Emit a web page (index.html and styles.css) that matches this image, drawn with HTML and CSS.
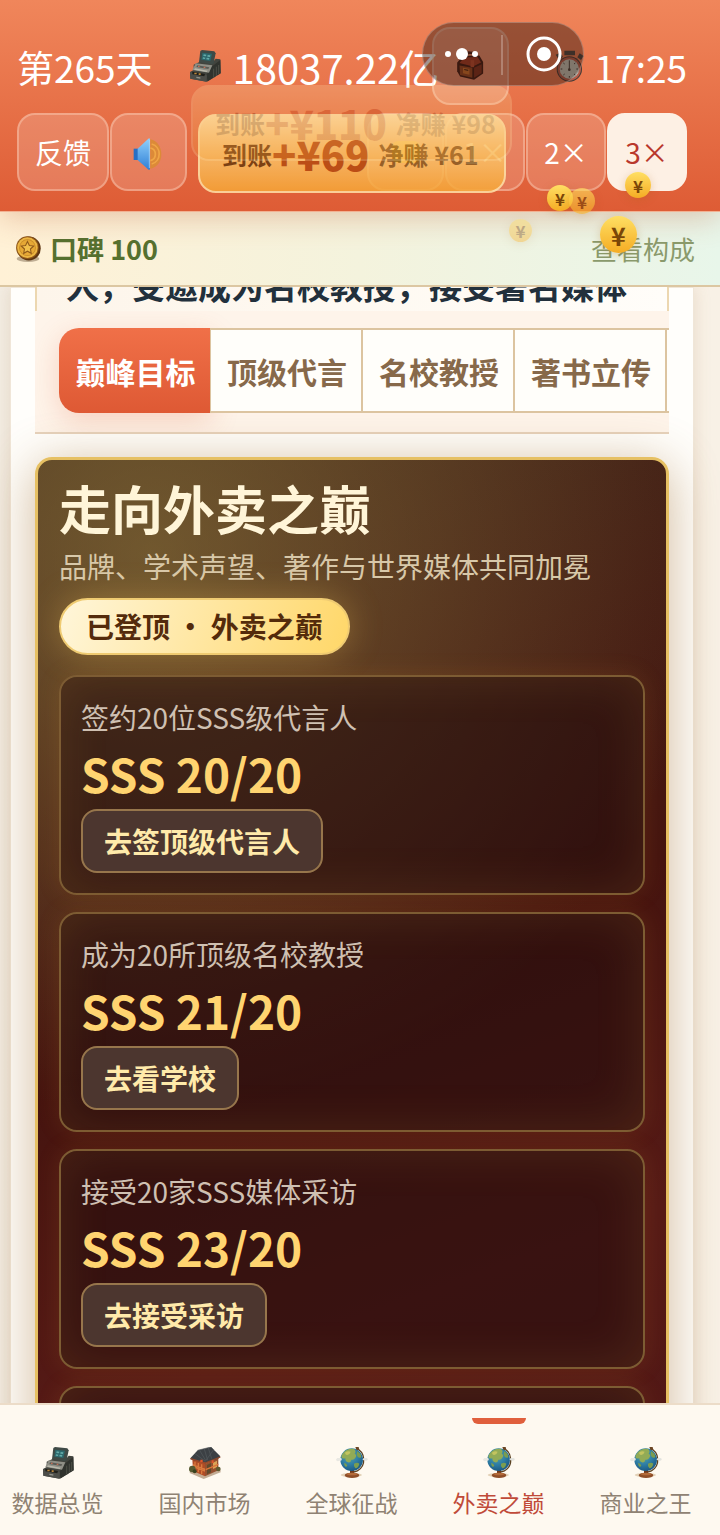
FILE: index.html
```html
<!DOCTYPE html>
<html lang="zh-CN">
<head>
    <meta charset="UTF-8">
    <meta name="viewport" content="width=device-width, initial-scale=1.0">
    <title>外卖之巅</title>
    <link rel="stylesheet" href="styles.css">
</head>
<body>
    <svg class="sprite" aria-hidden="true">
        <defs>
            <linearGradient id="speakerBlue" x1="0" y1="0" x2="0" y2="1">
                <stop offset="0" stop-color="#8fd0fb"/>
                <stop offset="1" stop-color="#2f7fd6"/>
            </linearGradient>
            <radialGradient id="sea" cx=".4" cy=".3" r=".8">
                <stop offset="0" stop-color="#5fa9a0"/>
                <stop offset=".5" stop-color="#2f7fa6"/>
                <stop offset="1" stop-color="#164f7c"/>
            </radialGradient>
        </defs>
        <symbol id="register" viewBox="0 0 96 96">
            <path d="M14 44 36 34 74 34 80 26 94 28 95 70 54 95 4 86 3 66 14 60Z" fill="#42443e"/>
            <path d="M66 52 94 30 95 70 56 94 52 76Z" fill="#30332e"/>
            <path d="M20 40 70 46 60 68 10 60Z" fill="#8f8f86"/>
            <path d="M25 46l36 6-3 5-36-6Z" fill="#5a5b55"/>
            <path d="M27 47h5v4h-5zM44 50h5v4h-5z" fill="#c46d54"/>
            <path d="M18 55l38 7-3 4-38-7Z" fill="#b9b8ab"/>
            <path d="M34 3 39 0 76 4 80 10 74 40 68 43 30 36Z" fill="#3f4a46"/>
            <path d="M40 8 69 11 64 33 37 29Z" fill="#2c686c"/>
            <path d="M44 13l8 1-1 5-8-1zM56 15l8 1-1 5-8-1zM42 22l7 1-1 4-7-1zM53 23l8 1-1 5-8-1z" fill="#64aaa8"/>
            <path d="M3 66 54 76 52 95 4 86Z" fill="#4c4d48"/>
            <path d="M10 65 48 72 46 79 10 73Z" fill="#1f1f1a"/>
            <path d="M16 68h7v5h-7zM29 70h6v5h-6z" fill="#bb873c"/>
            <path d="M22 80l12 2v4l-12-2Z" fill="#909087"/>
            <path d="M74 56v28M82 50v28M89 45v28" stroke="#4c4f47" stroke-width="3"/>
        </symbol>
        <symbol id="shop" viewBox="0 0 96 96">
            <path d="M2 78 44 96 95 76 94 68 50 62 4 68Z" fill="#c3ad95"/>
            <path d="M10 36 48 48 48 88 12 72Z" fill="#b04c26"/>
            <path d="M48 48 88 30 88 70 48 88Z" fill="#94502f"/>
            <path d="M14 54 46 66v5L14 59ZM18 44v28M28 48v28M38 52v30" stroke="#d97a3e" stroke-width="4" fill="none"/>
            <path d="M54 54 66 48 66 76 54 82Z" fill="#5f4a2c"/>
            <path d="M72 47 84 41 84 60 72 66Z" fill="#d9a355"/>
            <path d="M50 48 88 30M50 68 88 52" stroke="#dc7438" stroke-width="4"/>
            <path d="M4 34 26 10 66 0 94 28 90 34 50 48 8 38Z" fill="#3c4044"/>
            <path d="M26 10 66 0 74 8 48 44M18 20l30 22M32 10l18 30M46 6l10 34M58 3l10 32" stroke="#555a5d" stroke-width="2" fill="none"/>
            <path d="M4 35 48 48 94 30" stroke="#93472a" stroke-width="4" fill="none"/>
            <circle cx="10" cy="66" r="10" fill="#55592f"/>
            <circle cx="17" cy="73" r="6" fill="#39421f"/>
            <circle cx="88" cy="66" r="7" fill="#5c5a2f"/>
            <path d="M34 38h7v8h-7zM68 40h6v8h-6z" fill="#e0562a"/>
        </symbol>
        <symbol id="globe" viewBox="0 0 96 96">
            <ellipse cx="46" cy="84" rx="32" ry="6" fill="#e3d2b8"/>
            <path d="M60 4c28 10 32 52 4 68l-20 6" fill="none" stroke="#5b4222" stroke-width="4"/>
            <path d="M42 68h12v12H42z" fill="#6e381b"/>
            <ellipse cx="48" cy="85" rx="22" ry="8" fill="#8f4e28"/>
            <ellipse cx="48" cy="81" rx="16" ry="4" fill="#b36a39"/>
            <circle cx="47" cy="38" r="34" fill="url(#sea)"/>
            <path d="M20 20C28 8 42 4 54 6q8 6 2 14 8 4 2 12-4 8-12 6-2 10-10 8-8-2-8-12-10 2-12-4 0-6 4-10Z" fill="#92ab56"/>
            <path d="M64 12q10 6 12 18-6 6-12-2-4-8 0-16ZM54 50q10-6 16 0-2 12-12 14-6-6-4-14ZM24 48q8 0 10 8-4 6-8 0Z" fill="#7b9d50"/>
            <path d="M28 16q8-6 16-2-2 8-10 10-8 0-6-8Z" fill="#c3c45f"/>
            <path d="M58 0h10l2 8-8 2Z" fill="#6b4524"/>
            <path d="M0 38c2-5 6-6 9-4 4-4 9-1 8 3 2 4-3 5-7 4-4 3-9 1-10-3Z" fill="#e9e8e2"/>
            <path d="M80 37c2-5 6-5 8-3 4-2 8 1 7 4-3 4-8 3-10 2-4 0-6-1-5-3Z" fill="#e2e3de"/>
        </symbol>
        <symbol id="bag" viewBox="0 0 96 96">
            <path d="M30 18 42 2 66 4 70 22" fill="none" stroke="#481d14" stroke-width="8"/>
            <path d="M4 36 24 14 80 12 93 34 93 74 62 95 14 84 4 66Z" fill="#3f1810"/>
            <path d="M12 38 28 19 74 17 86 36 58 50Z" fill="#a53a22"/>
            <path d="M12 46 56 54 56 88 14 79Z" fill="#96451f"/>
            <path d="M62 54 88 42 88 72 62 88Z" fill="#7e2e1b"/>
            <path d="M24 54 46 58 46 78 24 73Z" fill="#d0702a"/>
            <path d="M28 60 42 63" stroke="#4c2613" stroke-width="4"/>
            <path d="M50 28h12v24H50z" fill="#bd4a2e"/>
        </symbol>
        <symbol id="stopwatch" viewBox="0 0 96 96">
            <path d="M34 2h32v14H34zM8 14 22 8l8 12-12 9ZM80 10l12 8-8 12-11-8Z" fill="#49433d"/>
            <circle cx="49" cy="57" r="38" fill="#443b35"/>
            <circle cx="49" cy="57" r="35" fill="#b55b49"/>
            <circle cx="49" cy="57" r="29" fill="#c3c6ba"/>
            <path d="M49 36v24M49 31v5M49 78v5M23 57h5M70 57h5M31 39l4 3M67 39l-4 3M31 75l4-3M67 75l-4-3" stroke="#433e39" stroke-width="3"/>
            <circle cx="49" cy="59" r="4" fill="#433e39"/>
        </symbol>
        <symbol id="medal" viewBox="0 0 96 96">
            <ellipse cx="48" cy="84" rx="42" ry="12" fill="#bfae94"/>
            <circle cx="51" cy="46" r="44" fill="#5d3510"/>
            <circle cx="46" cy="43" r="42" fill="#8d561a"/>
            <circle cx="46" cy="43" r="38" fill="#edb743"/>
            <circle cx="46" cy="43" r="31" fill="#c88a28"/>
            <circle cx="46" cy="43" r="28" fill="#e7a936"/>
            <path d="M46 20l7 15 16 2-12 11 3 16-14-8-14 8 3-16-12-11 16-2Z" fill="#f2c04c" stroke="#915b1b" stroke-width="4"/>
        </symbol>
        <symbol id="speaker" viewBox="0 0 96 96">
            <path d="M52 4c44 8 44 82 0 88Z" fill="#dc8a38"/>
            <path d="M52 30c20 4 20 34 0 38M56 18c30 8 30 52 0 60" fill="none" stroke="#f0a646" stroke-width="5"/>
            <path d="M2 32H18V66H2Z" fill="#276fc4"/>
            <path d="M14 32 46 2Q51-1 51 6V90Q51 99 45 94L14 66Z" fill="url(#speakerBlue)"/>
            <path d="M49 6v84" stroke="#b5d9f4" stroke-width="2"/>
        </symbol>
    </svg>

    <header class="topbar">
        <div class="status-row">
            <span class="day">第265天</span>
            <span class="money"><svg class="icon"><use href="#register"/></svg>18037.22亿</span>
            <button class="btn-top btn-bag" type="button" aria-label="背包"><svg class="icon-bag"><use href="#bag"/></svg></button>
            <span class="clock"><svg class="icon"><use href="#stopwatch"/></svg>17:25</span>
        </div>
        <div class="control-row">
            <button class="btn-top btn-feedback" type="button">反馈</button>
            <button class="btn-top" type="button" aria-label="声音"><svg class="icon"><use href="#speaker"/></svg></button>
            <button class="btn-top btn-pause" type="button" aria-label="暂停"><span class="pause-mark"></span></button>
            <button class="btn-top btn-speed" type="button">1×</button>
            <button class="btn-top btn-speed" type="button">2×</button>
            <button class="btn-top btn-speed active" type="button">3×</button>
        </div>

        <div class="toast toast-new"><span>到账</span><b>+¥69</b><span class="net">净赚 ¥61</span></div>
        <div class="toast toast-old"><span>到账</span><b>+¥110</b><span class="net">净赚 ¥98</span></div>

        <div class="capsule">
            <svg class="capsule-art" viewBox="0 0 160 62" aria-hidden="true">
                <g fill="#fff">
                    <circle cx="25" cy="31" r="3"/>
                    <circle cx="39" cy="31" r="6"/>
                    <circle cx="52" cy="31" r="3"/>
                    <circle cx="121" cy="31" r="7"/>
                </g>
                <path d="M79 12v40" stroke="#fff" stroke-opacity=".25" stroke-width="2"/>
                <circle cx="121" cy="31" r="16" fill="none" stroke="#fff" stroke-width="3"/>
            </svg>
        </div>

        <span class="coin coin-a">¥</span>
        <span class="coin coin-b">¥</span>
        <span class="coin coin-c">¥</span>
        <span class="coin coin-d">¥</span>
        <span class="coin coin-e">¥</span>
    </header>

    <div class="reputation">
        <svg class="icon-medal"><use href="#medal"/></svg>
        <strong>口碑 100</strong>
        <a href="#">查看构成</a>
    </div>

    <main class="page">
        <section class="panel">
            <div class="intro"><p>人，受邀成为名校教授，接受著名媒体</p></div>
            <div class="tabs-wrap">
                <div class="tabs">
                    <button class="tab active" type="button">巅峰目标</button>
                    <button class="tab" type="button">顶级代言</button>
                    <button class="tab" type="button">名校教授</button>
                    <button class="tab" type="button">著书立传</button>
                </div>
            </div>

            <article class="summit">
                <h1>走向外卖之巅</h1>
                <p class="summit-desc">品牌、学术声望、著作与世界媒体共同加冕</p>
                <span class="badge">已登顶 · 外卖之巅</span>

                <div class="goals">
                    <div class="goal">
                        <p>签约20位SSS级代言人</p>
                        <strong>SSS 20/20</strong>
                        <button type="button">去签顶级代言人</button>
                    </div>
                    <div class="goal">
                        <p>成为20所顶级名校教授</p>
                        <strong>SSS 21/20</strong>
                        <button type="button">去看学校</button>
                    </div>
                    <div class="goal">
                        <p>接受20家SSS媒体采访</p>
                        <strong>SSS 23/20</strong>
                        <button type="button">去接受采访</button>
                    </div>
                    <div class="goal"></div>
                </div>
            </article>
        </section>
    </main>

    <nav class="bottom-nav">
        <a href="#"><svg><use href="#register"/></svg>数据总览</a>
        <a href="#"><svg><use href="#shop"/></svg>国内市场</a>
        <a href="#"><svg><use href="#globe"/></svg>全球征战</a>
        <a href="#" class="active"><svg><use href="#globe"/></svg>外卖之巅</a>
        <a href="#"><svg><use href="#globe"/></svg>商业之王</a>
    </nav>
</body>
</html>
```
FILE: styles.css
```css
* {
    box-sizing: border-box;
}
body {
    margin: 0;
    height: 100vh;
    display: flex;
    flex-direction: column;
    overflow: hidden;
    background: #fef9f0;
    font-family: "Noto Sans CJK SC", "Noto Sans", sans-serif;
}
button {
    font-family: inherit;
    margin: 0;
    padding: 0;
}
p, h1 {
    margin: 0;
}
a {
    text-decoration: none;
}
.sprite {
    position: absolute;
    width: 0;
    height: 0;
}

/* header */
.topbar {
    position: relative;
    z-index: 2;
    flex: none;
    padding: 27px 33px 20px 17px;
    background: linear-gradient(#f0865b, #de5c35);
    border-bottom: 1px solid #f2b192;
    box-shadow: 0 6px 28px rgba(190, 90, 50, 0.3);
    color: #fff;
}
.status-row {
    display: flex;
    align-items: center;
    height: 78px;
    font-size: 37px;
    white-space: nowrap;
}
.day,
.money,
.clock {
    padding-top: 2px;
}
.money {
    flex: 1;
    width: 0;
    margin-left: 36px;
    display: flex;
    align-items: center;
    gap: 12px;
    font-size: 40px;
}
.clock {
    margin-left: 44px;
    display: flex;
    align-items: center;
    gap: 10px;
}
.icon {
    flex: none;
    width: 32px;
    height: 32px;
    margin-bottom: 3px;
}
.icon-bag {
    width: 28px;
    height: 30px;
}
.control-row {
    display: flex;
    gap: 1px;
    margin-top: 8px;
}
.btn-top {
    flex: none;
    width: 77px;
    height: 78px;
    display: flex;
    align-items: center;
    justify-content: center;
    border: 2px solid rgba(255, 220, 200, 0.38);
    border-radius: 18px;
    background: rgba(255, 255, 255, 0.17);
    color: #fff;
    font-size: 28px;
}
.btn-top .icon {
    margin: 4px 0 0;
}
.btn-feedback {
    width: 92px;
}
.btn-pause {
    margin-left: auto;
}
.pause-mark {
    width: 28px;
    height: 22px;
    border-radius: 6px;
    background: #f9b400;
}
.btn-speed {
    width: 80px;
}
.btn-speed.active {
    background: #fdf0e4;
    border-color: #fdf0e4;
    color: #b9382c;
}

/* income toasts */
.toast {
    position: absolute;
    display: flex;
    align-items: center;
    padding-left: 22px;
    border: 2px solid #ffe3a8;
    border-radius: 18px;
    background: linear-gradient(#ffe3a6, #f6a637);
    color: #6b3a0c;
    font-size: 25px;
    font-weight: 700;
    white-space: nowrap;
}
.toast b {
    color: #b54a10;
    font-size: 40px;
}
.toast .net {
    margin-left: 9px;
    color: #8a5a1e;
}
.toast-old {
    left: 191px;
    top: 85px;
    width: 321px;
    height: 76px;
    opacity: 0.24;
}
.toast-new {
    left: 198px;
    top: 114px;
    width: 308px;
    height: 79px;
    opacity: 0.85;
}

/* mini program capsule */
.capsule {
    position: absolute;
    left: 422px;
    top: 22px;
    width: 162px;
    height: 64px;
    border: 1px solid rgba(255, 255, 255, 0.25);
    border-radius: 32px;
    background: rgba(50, 25, 15, 0.46);
}
.capsule-art {
    display: block;
    width: 160px;
    height: 62px;
}

/* flying coins */
.coin {
    position: absolute;
    display: flex;
    align-items: center;
    justify-content: center;
    width: 26px;
    height: 26px;
    border-radius: 50%;
    background: linear-gradient(#ffdf63, #f5ac24);
    color: #7a4608;
    font-size: 17px;
    font-weight: 700;
    box-shadow: 0 2px 8px rgba(170, 100, 20, 0.25);
}
.coin-a {
    left: 547px;
    top: 185px;
}
.coin-b {
    left: 569px;
    top: 188px;
    opacity: 0.65;
}
.coin-c {
    left: 625px;
    top: 172px;
}
.coin-d {
    left: 600px;
    top: 216px;
    width: 37px;
    height: 37px;
    font-size: 25px;
}
.coin-e {
    left: 509px;
    top: 219px;
    width: 23px;
    height: 23px;
    opacity: 0.4;
}

/* reputation bar */
.reputation {
    flex: none;
    display: flex;
    align-items: center;
    height: 75px;
    padding: 0 25px 0 15px;
    background: linear-gradient(90deg, #fff1d6, #f4f3dd 50%, #e8f6ea);
    border-bottom: 2px solid #dcc7a2;
    color: #55702f;
    font-size: 27px;
}
.reputation strong {
    margin-left: 9px;
}
.reputation a {
    margin-left: auto;
    color: #8a9a6c;
    font-size: 26px;
}
.icon-medal {
    width: 26px;
    height: 28px;
}

/* page body */
.page {
    flex: 1;
    min-height: 0;
    overflow: hidden;
    padding: 0 26px 0 10px;
    background: linear-gradient(90deg, #f3ede3, #faf0e6 60%, #f8f1e6);
}
.panel {
    min-height: 100%;
    padding: 0 25px;
    background: #fffefb;
    box-shadow: 0 0 16px rgba(160, 110, 60, 0.18), inset 0 0 0 1px #f0e6d8;
}
.intro {
    display: flex;
    align-items: flex-end;
    height: 24px;
    padding: 0 0 3px 29px;
    border: 0 solid #ecd7b0;
    border-width: 0 2px;
    background: linear-gradient(90deg, #fdf5ea, #fffdf9);
    color: #22303c;
    font-size: 33px;
    font-weight: 700;
    line-height: 46px;
    white-space: nowrap;
}
.tabs-wrap {
    padding: 17px 0 19px 24px;
    background: #fef4ea;
    border-bottom: 2px solid #e6d2bc;
    overflow: hidden;
}
.tabs {
    display: flex;
    height: 85px;
}
.tabs::after {
    content: "";
    flex: 1 0 8px;
    border: 2px solid #dcc4a0;
    border-width: 2px 0;
    background: #fffefa;
}
.tab {
    flex: 0 0 152px;
    padding-left: 2px;
    border: 2px solid #dcc4a0;
    border-left: 0;
    background: #fffefa;
    color: #87694a;
    font-size: 30px;
    font-weight: 700;
    white-space: nowrap;
}
.tab.active {
    border: 0;
    border-right: 1px solid #dcc4a0;
    border-radius: 20px 0 0 20px;
    background: linear-gradient(#f07048, #de5934);
    box-shadow: 0 8px 28px rgba(222, 89, 52, 0.22);
    color: #fff;
}

/* summit card */
.summit {
    margin-top: 23px;
    padding: 18px 21px;
    border: 3px solid #e6c063;
    border-radius: 17px;
    background:
        radial-gradient(circle at 18% 8%, rgba(150, 130, 65, 0.55), transparent 560px),
        linear-gradient(160deg, #43281a, #45140f 45%, #561a16 70%, #4d1615);
    box-shadow: 0 8px 50px rgba(150, 100, 40, 0.45);
}
.summit h1 {
    color: #fff5d8;
    font-size: 52px;
    line-height: 60px;
}
.summit-desc {
    margin-top: 8px;
    color: #d8c8a9;
    font-size: 28px;
    line-height: 40px;
}
.badge {
    display: inline-block;
    margin-top: 12px;
    padding: 0 25px;
    border: 2px solid #efcb72;
    border-radius: 29px;
    background: linear-gradient(110deg, #fff6da, #ffd768);
    box-shadow: 0 0 34px rgba(255, 205, 95, 0.3);
    color: #542b0b;
    font-size: 28px;
    font-weight: 700;
    line-height: 53px;
    vertical-align: top;
}
.goals {
    display: flex;
    flex-direction: column;
    gap: 17px;
    margin-top: 20px;
}
.goal {
    display: flex;
    flex-direction: column;
    align-items: flex-start;
    min-height: 220px;
    padding: 20px;
    border: 2px solid #7d5c33;
    border-radius: 18px;
    background: rgba(36, 14, 14, 0.58);
    box-shadow: inset 0 0 50px rgba(230, 170, 70, 0.13), 0 0 24px rgba(220, 140, 40, 0.14);
}
.goal p {
    color: #cfc0b2;
    font-size: 28px;
    line-height: 40px;
}
.goal strong {
    color: #ffd470;
    font-size: 46px;
    line-height: 72px;
}
.goal button {
    height: 64px;
    padding: 0 21px;
    border: 2px solid #97764c;
    border-radius: 16px;
    background: #4c362f;
    color: #ffeaaa;
    font-size: 28px;
    font-weight: 700;
}

/* bottom nav */
.bottom-nav {
    flex: none;
    display: flex;
    justify-content: flex-end;
    height: 132px;
    padding: 13px 1px 0 0;
    border-top: 2px solid #ecdcc8;
    background: #fef9f0;
}
.bottom-nav a {
    position: relative;
    flex: 0 0 147px;
    display: flex;
    flex-direction: column;
    align-items: center;
    padding-top: 29px;
    color: #8f8273;
    font-size: 23px;
    line-height: 34px;
}
.bottom-nav svg {
    width: 32px;
    height: 32px;
    margin-bottom: 6px;
}
.bottom-nav a.active {
    color: #c04a39;
}
.bottom-nav a.active::before {
    content: "";
    position: absolute;
    top: 0;
    width: 54px;
    height: 6px;
    border-radius: 0 0 6px 6px;
    background: #e05f3c;
}
```
